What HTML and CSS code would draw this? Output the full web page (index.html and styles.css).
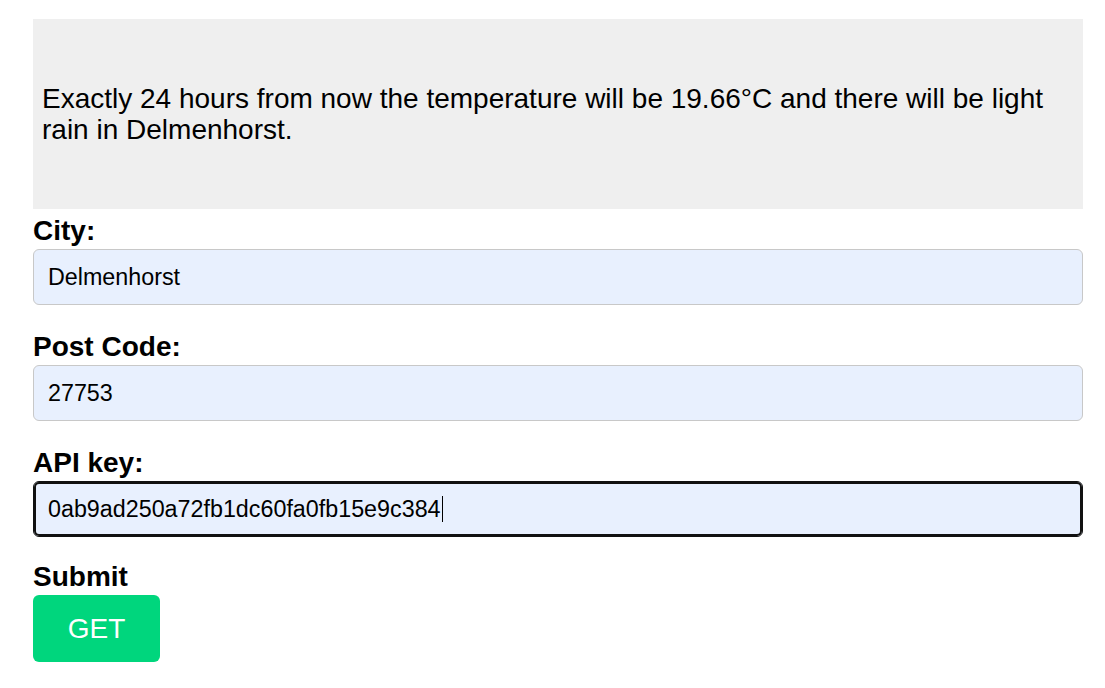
FILE: index.html
```html
<!DOCTYPE html>
<html>
<head>
<meta charset="utf-8">
<link rel="stylesheet" href="styles.css">
</head>
<body>
<div class="page">
  <div class="result">
    <p class="result-text">Exactly 24 hours from now the temperature will be 19.66°C and there will be light rain in Delmenhorst.</p>
  </div>
  <form class="form">
    <div class="field">
      <label class="label" for="city">City:</label>
      <input class="input" id="city" type="text" value="Delmenhorst">
    </div>
    <div class="field">
      <label class="label" for="post">Post Code:</label>
      <input class="input" id="post" type="text" value="27753">
    </div>
    <div class="field field-tight">
      <label class="label">API key:</label>
      <div class="input input-focused"><span class="value">0ab9ad250a72fb1dc60fa0fb15e9c384</span><span class="caret"></span></div>
    </div>
    <div class="field">
      <span class="label">Submit</span>
      <button class="button" type="button">GET</button>
    </div>
  </form>
</div>
</body>
</html>
```
FILE: styles.css
```css
html, body {
  margin: 0;
  padding: 0;
  background: #ffffff;
}
body {
  font-family: "Liberation Sans", Arial, sans-serif;
  color: #000;
}
.page {
  width: 1050px;
  margin: 19px 0 0 33px;
}
.result {
  height: 190px;
  background: #efefef;
  display: flex;
  align-items: center;
  padding: 0 9px;
  box-sizing: border-box;
}
.result-text {
  margin: 0;
  font-size: 28px;
  line-height: 31px;
}
.form {
  display: flex;
  flex-direction: column;
  padding-top: 6px;
}
.field {
  display: flex;
  flex-direction: column;
  margin-bottom: 26px;
}
.field-tight {
  margin-bottom: 24px;
}
.label {
  font-size: 28px;
  font-weight: bold;
  line-height: 32px;
  margin-bottom: 2px;
}
.input {
  box-sizing: border-box;
  width: 1050px;
  height: 56px;
  margin: 0;
  padding: 0 14px;
  border: 1px solid #c8c8c8;
  border-radius: 6px;
  background: #e8f0fe;
  font-family: "Liberation Sans", Arial, sans-serif;
  font-size: 23.3px;
  color: #000;
  outline: none;
}
.input-focused {
  display: flex;
  align-items: center;
  border-color: #111;
  box-shadow: inset 0 0 0 2px #111;
}
.caret {
  display: inline-block;
  width: 1px;
  height: 26px;
  background: #000;
  margin-left: 1px;
}
.button {
  width: 127px;
  height: 67px;
  border: none;
  border-radius: 6px;
  background: #00d67d;
  color: #fff;
  font-family: "Liberation Sans", Arial, sans-serif;
  font-size: 28px;
  padding: 0;
}
```
